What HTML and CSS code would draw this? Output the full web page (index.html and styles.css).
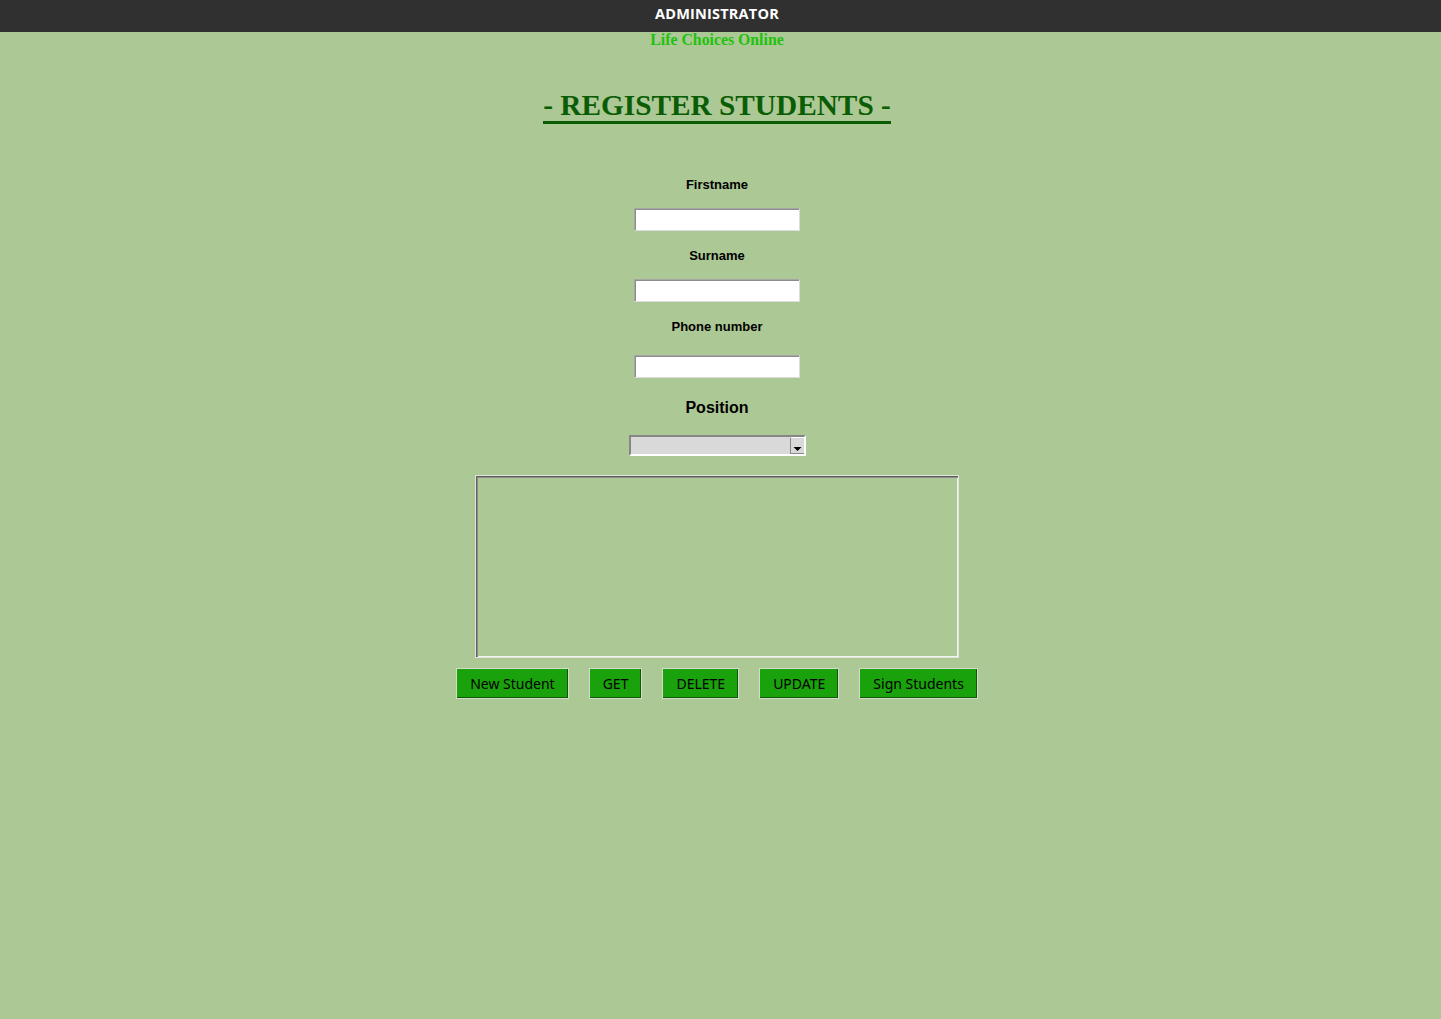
FILE: index.html
```html
<!DOCTYPE html>
<html lang="en">
<head>
<meta charset="utf-8">
<title>ADMINISTRATOR</title>
<link rel="stylesheet" href="styles.css">
</head>
<body>
<header class="titlebar">ADMINISTRATOR</header>
<main class="app">
  <div class="brand">Life Choices Online</div>
  <h1 class="heading"><span class="heading-text">- REGISTER STUDENTS -</span></h1>

  <label class="field-label label-first" for="firstname">Firstname</label>
  <input class="entry entry-first" id="firstname" type="text">

  <label class="field-label label-next" for="surname">Surname</label>
  <input class="entry entry-first" id="surname" type="text">

  <label class="field-label label-next" for="phone">Phone number</label>
  <input class="entry entry-phone" id="phone" type="text">

  <div class="position-label">Position</div>
  <div class="optionmenu">
    <span class="optionmenu-value"></span>
    <span class="optionmenu-arrow">
      <svg width="9" height="6" viewBox="0 0 9 6"><polygon points="0.5,1 8.5,1 4.5,5" fill="#000"/></svg>
    </span>
  </div>

  <div class="listbox"></div>

  <div class="buttons">
    <button class="btn" type="button">New Student</button>
    <button class="btn" type="button">GET</button>
    <button class="btn" type="button">DELETE</button>
    <button class="btn" type="button">UPDATE</button>
    <button class="btn" type="button">Sign Students</button>
  </div>
</main>
</body>
</html>
```

FILE: styles.css
```css
html {
  background: #acc894;
}

body {
  margin: 0;
  width: 1441px;
  min-height: 1019px;
  background: #acc894;
  font-family: "Liberation Sans", Arial, sans-serif;
}

.titlebar {
  display: block;
  height: 32px;
  box-sizing: border-box;
  padding-right: 7px;
  background: #313031;
  color: #ffffff;
  font-family: "Open Sans", "DejaVu Sans", sans-serif;
  font-weight: 700;
  font-size: 14.5px;
  line-height: 28px;
  text-align: center;
  letter-spacing: 0.2px;
}

.app {
  display: flex;
  flex-direction: column;
  align-items: center;
  padding-right: 7px;
}

.brand {
  font-family: "Liberation Serif", "Times New Roman", serif;
  font-weight: 700;
  font-size: 15.8px;
  line-height: 16px;
  height: 16px;
  color: #20c20e;
}

.heading {
  margin: 42px 0 0;
  font-family: "Liberation Serif", "Times New Roman", serif;
  font-weight: 700;
  font-size: 29.3px;
  line-height: 34px;
  height: 34px;
  color: #0b5d05;
}

.heading-text {
  display: inline-block;
  line-height: 31px;
  border-bottom: 3px solid #0b5d05;
  vertical-align: top;
}

.field-label {
  display: block;
  font-weight: 700;
  font-size: 13px;
  line-height: 16px;
  color: #000;
}

.label-first {
  margin-top: 53px;
}

.label-next {
  margin-top: 17px;
}

.entry {
  display: block;
  box-sizing: border-box;
  width: 166px;
  height: 23px;
  margin: 15px 0 0;
  padding: 0 3px;
  background: #ffffff;
  border: 1px solid;
  border-color: #a6a6a6 #dcdcdc #dcdcdc #a6a6a6;
  box-shadow: inset 1px 1px 0 #8c8c8c;
  outline: none;
  font-family: "Noto Sans", sans-serif;
  font-size: 13px;
}

.entry-phone {
  margin-top: 20px;
}

.position-label {
  margin-top: 20px;
  font-weight: 700;
  font-size: 16px;
  line-height: 20px;
  color: #000;
}

.optionmenu {
  display: flex;
  box-sizing: border-box;
  width: 177px;
  height: 21px;
  margin-top: 17px;
  background: #d9d9d9;
  border-top: 2px solid #868686;
  border-left: 2px solid #868686;
  border-right: 2px solid #ffffff;
  border-bottom: 2px solid #ffffff;
}

.optionmenu-value {
  flex: 1;
}

.optionmenu-arrow {
  display: flex;
  align-items: flex-end;
  justify-content: center;
  box-sizing: border-box;
  width: 14px;
  height: 17px;
  padding-bottom: 1px;
  border-left: 1px solid #8a8a8a;
  border-top: 1px solid #ffffff;
  border-bottom: 1px solid #8a8a8a;
  background: #d9d9d9;
}

.optionmenu-arrow svg {
  display: block;
}

.listbox {
  box-sizing: border-box;
  width: 484px;
  height: 183px;
  margin-top: 19px;
  border: 1px solid #dfe5d7;
  box-shadow: inset 1px 1px 0 #5f5f5f, inset 2px 2px 0 #8c8c8c, inset -1px -1px 0 #f4f4f4;
  background: #acc894;
}

.buttons {
  display: flex;
  gap: 20px;
  margin-top: 10px;
}

.btn {
  box-sizing: border-box;
  height: 31px;
  margin: 0;
  padding: 0 13px;
  background: #1aa20c;
  border: 1px solid #d3dccb;
  box-shadow: inset -1px -1px 0 #0c5a06;
  color: #000;
  font-family: "Noto Sans", "DejaVu Sans", sans-serif;
  font-size: 14px;
  line-height: 29px;
  cursor: pointer;
}
```
